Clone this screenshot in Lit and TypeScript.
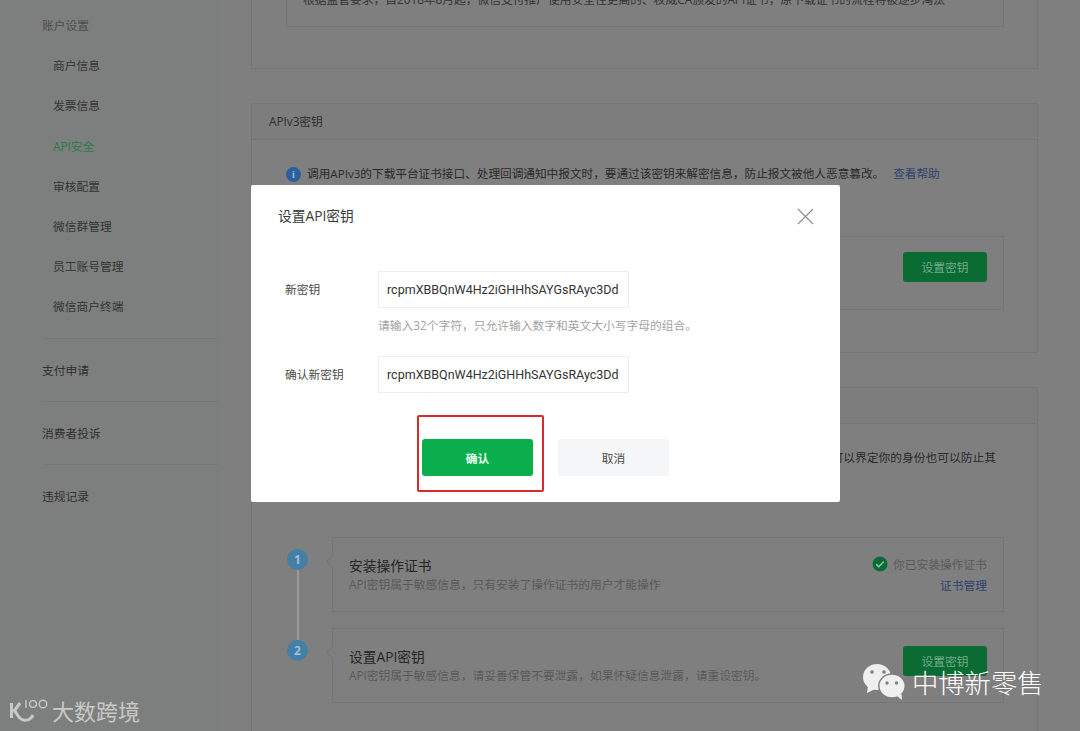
import { LitElement, html, css } from "lit";
import { customElement } from "lit/decorators.js";

const check = html`<svg class="check" viewBox="0 0 16 16" width="16" height="16"><circle cx="8" cy="8" r="7.5" fill="#0b6b38"/><path d="M4.2 8.2l2.6 2.6 5-5.2" fill="none" stroke="#a9c9b6" stroke-width="1.3"/></svg>`;

@customElement("app-root")
export class AppRoot extends LitElement {
  static styles = css`
    :host { display: block; position: relative; width: 1080px; height: 731px; overflow: hidden; background: #7f7f7f; color: #1d1d1d;
      font: 11.75px/18px "Open Sans", "Noto Sans CJK SC", sans-serif; }
    .page { display: flex; height: 731px; }
    .side { width: 222px; flex: none; padding: 5px 0 0 42px; box-sizing: border-box; color: #333433; background: #7d7f7e; }
    .nav { width: 176px; }
    .row { height: 40.17px; display: flex; align-items: center; }
    .group { color: #4d4e4d; }
    .group.line { height: 62px; border-top: 1px solid #767776; color: #2f302f; }
    .group.first-line { margin-top: 12px; }
    .item { padding-left: 11px; }
    .item.on { color: #2a7a4c; }
    .main { width: 787px; flex: none; margin: -60px 0 0 29px; display: flex; flex-direction: column; gap: 34px; }
    .card { flex: none; border: 1px solid #767676; box-sizing: border-box; }
    .card.a { height: 129px; padding: 20px 33px 0 34px; }
    .card.b { height: 250px; }
    .card.c { height: 380px; }
    .box { border: 1px solid #767676; box-sizing: border-box; }
    .a .box { height: 66px; padding: 28px 16px 0; white-space: nowrap; color: #333; }
    .head { height: 36px; box-sizing: border-box; padding: 0 0 2px 17px; display: flex; align-items: center; border-bottom: 1px solid #767676; color: #2f2f2f; background: #7d7d7d; }
    .body { padding: 24px 33px 0 34px; }
    .notice { display: flex; align-items: center; gap: 6px; height: 20px; white-space: nowrap; color: #2a2a2a; font-size: 11.65px; }
    .info { width: 15px; height: 15px; border-radius: 50%; background: #2c5f9e; color: #9fb8d8; font: 700 10px/15px "Liberation Serif", serif; text-align: center; flex: none; }
    .link { color: #32416f; margin-left: 9px; }
    .b .box { margin-top: 52px; height: 74px; padding: 15px 16px 0; display: flex; justify-content: flex-end; }
    .btn { width: 84px; height: 30px; background: #0a6b33; color: #74aa8c; border-radius: 3px; display: flex; align-items: center; justify-content: center; box-sizing: border-box; padding-bottom: 1px; }
    .tail { text-align: right; white-space: nowrap; padding-right: 8px; height: 20px; color: #2a2a2a; }
    .steps { margin-top: 69px; display: flex; flex-direction: column; gap: 16px; }
    .step { display: flex; gap: 24px; align-items: flex-start; }
    .num { width: 21px; height: 21px; border-radius: 50%; background: #437fa6; color: #9fc0d6; font: 700 12px/21px "Open Sans", sans-serif; text-align: center; margin-top: 12px; margin-left: 1px; position: relative; flex: none; }
    .step:first-child .num::after { content: ""; position: absolute; left: 9.5px; top: 21px; width: 2px; height: 70px; background: #999; }
    .sbox { flex: 1; height: 75px; padding: 19px 16px 0; display: flex; justify-content: space-between; position: relative; border: 1px solid #767676; box-sizing: border-box; }
    .sbox::before { content: ""; position: absolute; left: -5px; top: 19px; width: 8px; height: 8px; background: #7f7f7f; border-left: 1px solid #767676; border-bottom: 1px solid #767676; transform: rotate(45deg); }
    .t { font-size: 13.75px; line-height: 18px; color: #262626; }
    .s { color: #5a5a5a; line-height: 19px; }
    .r { display: flex; flex-direction: column; align-items: flex-end; gap: 3px; margin-top: -2px; color: #5a5a5a; }
    .r div { display: flex; align-items: center; gap: 5px; }
    .check { flex: none; }
    .r .link { margin: 0; }
    .step:last-child .btn { margin-top: -2px; }

    .dialog { position: absolute; left: 251px; top: 185px; width: 589px; height: 317px; background: #fff; border-radius: 2px; box-sizing: border-box; padding: 0 27px; color: #333; }
    .dhead { height: 62px; display: flex; justify-content: space-between; align-items: center; font-size: 13.75px; color: #3a3a3a; }
    .close { width: 17px; height: 17px; margin-right: -1px; display: block; }
    .form { padding: 24px 0 0 7px; display: grid; grid-template-columns: 93px 251px; align-items: center; }
    .form label { color: #4a4a4a; padding-bottom: 2px; }
    .input { height: 37px; border: 1px solid #eceded; border-radius: 1px; box-sizing: border-box; display: flex; align-items: center; padding-left: 8px; font: 12.5px/18px Roboto, sans-serif; color: #333; white-space: nowrap; }
    .hint { grid-column: 2; color: #a2a2a2; white-space: nowrap; height: 48px; line-height: 34px; }
    .actions { display: flex; gap: 25px; padding: 46px 0 0 144px; }
    .action { width: 111px; height: 37px; border-radius: 3px; display: flex; align-items: center; justify-content: center; background: #f5f6f7; color: #4a4a4a; position: relative; }
    .action.ok { background: #0bae4c; color: #e9fff2; font-weight: 700; }
    .action.ok::after { content: ""; position: absolute; left: -5px; right: -11px; top: -24px; bottom: -16px; border: 2px solid #d92b2b; border-radius: 2px; }

    .wm { position: absolute; display: flex; align-items: center; white-space: nowrap; }
    .wm.left { left: 9px; top: 696px; gap: 4px; font-size: 22px; line-height: 30px; color: #c8c8c8; }
    .wm.right { left: 862px; top: 662px; gap: 6px; font-size: 26.3px; line-height: 40px; color: #fff; font-family: "Noto Sans CJK SC", sans-serif; font-weight: 300; }
  `;

  render() {
    return html`
      <div class="page">
        <aside class="side">
          <nav class="nav">
            <div class="row group">账户设置</div>
            <div class="row item">商户信息</div>
            <div class="row item">发票信息</div>
            <div class="row item on">API安全</div>
            <div class="row item">审核配置</div>
            <div class="row item">微信群管理</div>
            <div class="row item">员工账号管理</div>
            <div class="row item">微信商户终端</div>
            <div class="row group line first-line">支付申请</div>
            <div class="row group line">消费者投诉</div>
            <div class="row group line">违规记录</div>
          </nav>
        </aside>
        <main class="main">
          <section class="card a">
            <div class="box">根据监管要求，自2018年8月起，微信支付推广使用安全性更高的、权威CA颁发的API证书，原下载证书的流程将被逐步淘汰</div>
          </section>
          <section class="card b">
            <div class="head">APIv3密钥</div>
            <div class="body">
              <div class="notice"><span class="info">i</span><span>调用APIv3的下载平台证书接口、处理回调通知中报文时，要通过该密钥来解密信息，防止报文被他人恶意篡改。<span class="link">查看帮助</span></span></div>
              <div class="box"><div class="btn">设置密钥</div></div>
            </div>
          </section>
          <section class="card c">
            <div class="head"></div>
            <div class="body">
              <div class="tail">可以界定你的身份也可以防止其</div>
              <div class="steps">
                <div class="step">
                  <div class="num">1</div>
                  <div class="sbox">
                    <div><div class="t">安装操作证书</div><div class="s">API密钥属于敏感信息，只有安装了操作证书的用户才能操作</div></div>
                    <div class="r"><div>${check}<span>你已安装操作证书</span></div><span class="link">证书管理</span></div>
                  </div>
                </div>
                <div class="step">
                  <div class="num">2</div>
                  <div class="sbox">
                    <div><div class="t">设置API密钥</div><div class="s">API密钥属于敏感信息，请妥善保管不要泄露，如果怀疑信息泄露，请重设密钥。</div></div>
                    <div class="btn">设置密钥</div>
                  </div>
                </div>
              </div>
            </div>
          </section>
        </main>
      </div>

      <div class="dialog">
        <div class="dhead">
          <span>设置API密钥</span>
          <svg class="close" viewBox="0 0 17 17"><path d="M1 1l15 15M16 1L1 16" stroke="#8c8c8c" stroke-width="1.1" fill="none"/></svg>
        </div>
        <div class="form">
          <label>新密钥</label>
          <div class="input">rcpmXBBQnW4Hz2iGHHhSAYGsRAyc3Dd</div>
          <div class="hint">请输入32个字符，只允许输入数字和英文大小写字母的组合。</div>
          <label>确认新密钥</label>
          <div class="input">rcpmXBBQnW4Hz2iGHHhSAYGsRAyc3Dd</div>
        </div>
        <div class="actions">
          <div class="action ok">确认</div>
          <div class="action">取消</div>
        </div>
      </div>

      <div class="wm left">
        <svg width="39" height="28" viewBox="0 0 39 28" fill="none" stroke="#c8c8c8" stroke-width="3">
          <path d="M2.500 6v15"/>
          <path d="M11 6L5.500 13.500c1.500 2 2.500 3.800 4 6 3 4.500 9 5 12.500 1.500 1-1 1.500-2 2-3"/>
          <path d="M17 3v8" stroke-width="1.4"/>
          <circle cx="24" cy="7" r="3.400" stroke-width="1.400"/><circle cx="34" cy="7" r="3.800" stroke-width="1.400"/>
        </svg>
        <span>大数跨境</span>
      </div>
      <div class="wm right">
        <svg width="44" height="38" viewBox="0 0 44 38">
          <ellipse cx="15" cy="14" rx="14" ry="13" fill="#efefef"/>
          <path d="M6 23l-1 7 8-4z" fill="#efefef"/>
          <ellipse cx="30" cy="23" rx="13.200" ry="12" fill="#efefef" stroke="#7f7f7f" stroke-width="1.400"/>
          <path d="M35 33l5 4-.5-6z" fill="#efefef"/>
          <circle cx="10" cy="9" r="1.800" fill="#7f7f7f"/><circle cx="22" cy="9" r="1.800" fill="#7f7f7f"/>
          <circle cx="25" cy="20" r="1.700" fill="#7f7f7f"/><circle cx="34.500" cy="20" r="1.700" fill="#7f7f7f"/>
        </svg>
        <span>中博新零售</span>
      </div>
    `;
  }
}
